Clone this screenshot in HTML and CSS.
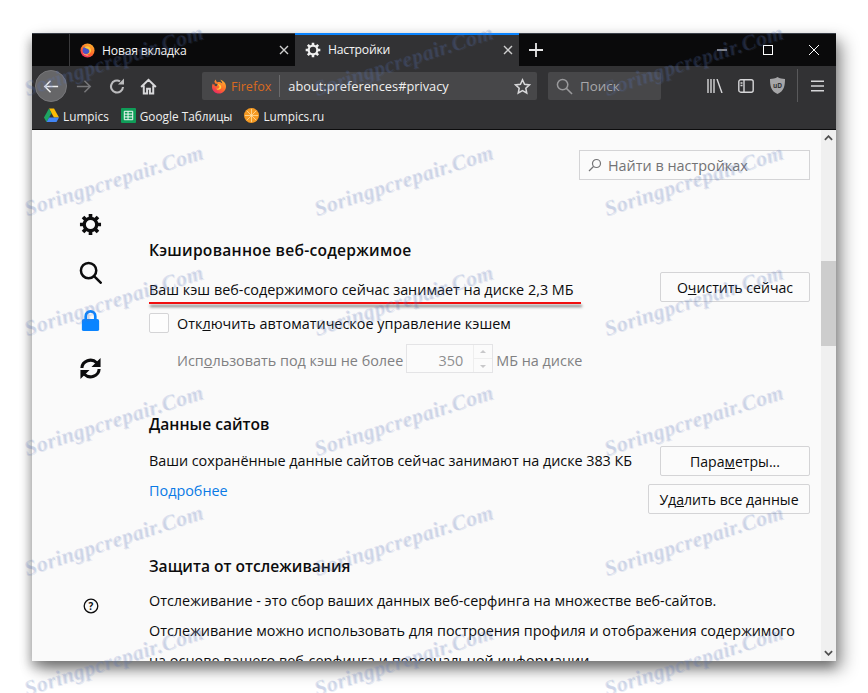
FILE: index.html
```html
<!DOCTYPE html>
<html lang="ru">
<head>
<meta charset="utf-8">
<title>Настройки</title>
<link rel="stylesheet" href="styles.css">
</head>
<body>
<svg class="defs" width="0" height="0" aria-hidden="true">
  <defs>
    <linearGradient id="fxg" x1="0.8" y1="0" x2="0.2" y2="1">
      <stop offset="0" stop-color="#ffb52e"/>
      <stop offset=".55" stop-color="#ff6a2a"/>
      <stop offset="1" stop-color="#e8206a"/>
    </linearGradient>
  </defs>
  <symbol id="fx" viewBox="0 0 16 16">
    <circle cx="8" cy="8" r="7.500" fill="url(#fxg)"/>
    <circle cx="6.800" cy="7.600" r="4" fill="#4a55c8"/>
    <path d="M4.500 4.200C6 3 9 3 10.800 5c1.500 1.800 1.400 4.400-.2 6-1.200 1.200-3 1.500-4.600.8 2 .2 3.800-.8 4-2.600.2-1.400-.6-2.600-2-3.200-1.300-.5-2.600-.6-3.500-1.800z" fill="#ffc93a"/>
    <path d="M3 10.500c1.500 2.600 4.400 3.300 6.800 2.300-2.600.2-5-.6-6.800-2.300z" fill="#ffd9a0"/>
  </symbol>
  <symbol id="fxbar" viewBox="0 0 16 16">
    <path d="M4.500 1.500L6 4.400C6.500 4.200 7.200 4 8 4c1.300 0 2.500.6 3.300 1.500-.3-1.500-1-2.800-2.200-3.700 3 .6 5.700 3 5.900 6.400.2 3.900-3 7.300-7 7.300s-7-3-7-6.800c0-1.200.3-2.300.8-3.300L3 7c.4-.4.800-.7 1.200-.9L3.400 3.500z" fill="url(#fxg)"/>
    <path d="M5.800 6.500c1.600-.6 3.500.1 4.200 1.500.7 1.500-.1 3.200-1.800 3.600-1.300.3-2.500-.2-3.100-1.200 1 .5 2.300.4 3-.4.700-.9.400-2.200-.6-2.800-.6-.4-1.200-.5-1.700-.7z" fill="#ffd23f"/>
    <path d="M4 5.500l2.700.5-1 2.200L3.600 8z" fill="#474749"/>
  </symbol>
  <symbol id="gear" viewBox="0 0 24 24">
    <g fill="none" stroke="currentColor">
      <circle cx="12" cy="12" r="6.500" stroke-width="3.400"/>
      <path stroke-width="3.800" d="M12 1v5M12 18v5M1 12h5M18 12h5M4.200 4.200l3.500 3.500M16.300 16.300l3.500 3.500M19.800 4.200l-3.500 3.500M7.700 16.300l-3.500 3.500"/>
    </g>
  </symbol>
</svg>

<div class="window">
  <div class="tabbar">
    <div class="tab-spacer"></div>
    <div class="tab">
      <svg class="ico15"><use href="#fx"/></svg>
      <span class="tab-title">Новая вкладка</span>
      <svg class="tab-x" viewBox="0 0 10 10"><path d="M1 1l8 8M9 1l-8 8"/></svg>
    </div>
    <div class="tab active">
      <svg class="ico15 gear-w"><use href="#gear"/></svg>
      <span class="tab-title">Настройки</span>
      <svg class="tab-x" viewBox="0 0 10 10"><path d="M1 1l8 8M9 1l-8 8"/></svg>
    </div>
    <svg class="plus" viewBox="0 0 14 14"><path d="M7 0v14M0 7h14"/></svg>
    <div class="winctl">
      <svg class="wc" viewBox="0 0 10 10"><path d="M0 5h10"/></svg>
      <svg class="wc" viewBox="0 0 10 10"><rect x=".5" y=".5" width="9" height="9"/></svg>
      <svg class="wc" viewBox="0 0 10 10"><path d="M0 0l10 10M10 0L0 10"/></svg>
    </div>
  </div>

  <div class="toolbar">
    <div class="back">
      <svg viewBox="0 0 18 16" class="nav-ico"><path d="M17 8H2M8.500 1.500L2 8l6.500 6.500"/></svg>
    </div>
    <svg viewBox="0 0 18 16" class="nav-ico fwd"><path d="M1 8h15M9.500 1.500L16 8l-6.500 6.500"/></svg>
    <svg viewBox="0 0 16 16" class="nav-ico reload"><path d="M14 9A6 6 0 1 1 11 3.300"/><path class="reload-head" d="M15 .5V6.500H9z"/></svg>
    <svg viewBox="0 0 18 18" class="nav-ico home"><path d="M1.200 9.500L9 2l7.800 7.500M4 8V16.500h3.500v-5h3v5H14V8"/></svg>
    <div class="urlbar">
      <svg class="ico15 ff-big"><use href="#fxbar"/></svg>
      <span class="ff-name">Firefox</span>
      <span class="url-sep"></span>
      <span class="url">about:preferences#privacy</span>
      <svg class="star" viewBox="0 0 18 18"><path d="M9 2l2.200 4.700 5.100.6-3.800 3.500 1 5.100L9 13.400l-4.500 2.500 1-5.100L1.700 7.300l5.100-.6z"/></svg>
    </div>
    <div class="searchbar">
      <svg class="s-ico" viewBox="0 0 18 18"><circle cx="7" cy="7" r="5.500"/><path d="M11 11l6 6"/></svg>
      <span>Поиск</span>
    </div>
    <div class="tools">
      <svg class="t-ico lib" viewBox="0 0 16 14"><path d="M1 0v14M4 0v14M7 0v14M10 0l5 14"/></svg>
      <svg class="t-ico side" viewBox="0 0 16 14"><rect x=".8" y=".8" width="14.400" height="12.400" rx="2"/><path d="M6 1v12M2.500 4h2M2.500 6.500h2"/></svg>
      <svg class="ublock" viewBox="0 0 16 18"><path d="M8 0c2.500 1.500 5 2 8 2 0 7-1 13-8 16C1 15 0 9 0 2c3 0 5.500-.5 8-2z" fill="#a6a6a8"/><text x="8" y="11.500" class="ub-text">uD</text></svg>
      <span class="tool-sep"></span>
      <svg class="t-ico menu" viewBox="0 0 14 12"><path d="M0 1h14M0 6h14M0 11h14"/></svg>
    </div>
  </div>

  <div class="bookmarks">
    <span class="bm">
      <svg class="ico15" viewBox="0 0 16 15"><path d="M5.300 0h5.400l5.300 9.500h-5.400z" fill="#fbbc04"/><path d="M5.300 0L0 9.700 2.700 14.500 8 5z" fill="#1ea362"/><path d="M2.700 14.500h10.600L16 9.700H5.400z" fill="#4285f4"/></svg>
      Lumpics
    </span>
    <span class="bm">
      <svg class="ico15 sheets" viewBox="0 0 16 16"><rect width="16" height="16" rx="1" fill="#0f9d58"/><path d="M3.500 3.500h9v9h-9zM3.500 6.500h9M3.500 9.500h9M7.500 3.500v9" fill="none" stroke="#fff"/></svg>
      Google Таблицы
    </span>
    <span class="bm">
      <svg class="ico15" viewBox="0 0 16 16"><circle cx="8" cy="8" r="8" fill="#f59a23"/><path d="M8 1v14M1 8h14M3 3l10 10M13 3L3 13" stroke="#ffe0a8" stroke-width=".8"/></svg>
      Lumpics.ru
    </span>
  </div>

  <div class="content">
    <nav class="sidebar">
      <svg class="cat cat-gear"><use href="#gear"/></svg>
      <svg class="cat" viewBox="0 0 24 24"><circle cx="10" cy="10" r="8" class="cat-line"/><path d="M16 16L23.500 23.500" class="cat-line"/></svg>
      <svg class="cat" viewBox="0 0 24 24"><path d="M7 11V7.500a5 5 0 0 1 10 0V11" class="cat-lock"/><rect x="3" y="10.500" width="18" height="12.500" rx="2" fill="#0a84ff"/></svg>
      <svg class="cat" viewBox="0 0 24 24"><path d="M3 11.500a9 8.500 0 0 1 15.500-5.500M21 12.500a9 8.500 0 0 1-15.500 5.500" class="cat-line cat-thick"/><path d="M22.500 1V10.500H13zM1.500 23V13.500H11z" fill="#0c0c0d"/></svg>
      <svg class="cat-help" viewBox="0 0 16 16"><circle cx="8" cy="8" r="6.800" class="help-line"/><text x="8" y="11.800" class="help-q">?</text></svg>
    </nav>
    <main class="main">
      <div class="find-row">
        <div class="find">
          <svg class="find-ico" viewBox="0 0 14 14"><circle cx="8.500" cy="5.500" r="4"/><path d="M5.500 8.500L1 13"/></svg>
          <span>Найти в настройках</span>
        </div>
      </div>

      <h2 class="h h-first">Кэшированное веб-содержимое</h2>
      <div class="row row-cache">
        <span class="cache-text">Ваш кэш веб-содержимого сейчас занимает на диске 2,3 МБ</span>
        <button class="btn btn-clear">О<u>ч</u>истить сейчас</button>
      </div>
      <div class="redline"></div>
      <div class="check-row">
        <span class="checkbox"></span>
        <span>Отк<u>л</u>ючить автоматическое управление кэшем</span>
      </div>
      <div class="limit-row">
        <span class="limit-text">Исп<u>о</u>льзовать под кэш не более</span>
        <span class="spin">
          <span class="spin-val">350</span>
          <span class="spin-arrows"><i class="up"></i><i class="down"></i></span>
        </span>
        <span class="limit-text">МБ на диске</span>
      </div>

      <h2 class="h h-data">Данные сайтов</h2>
      <div class="data-row">
        <div class="data-text">
          <p class="data-line">Ваши сохранённые данные сайтов сейчас занимают на диске 383 КБ</p>
          <a class="more">Подробнее</a>
        </div>
        <div class="data-btns">
          <button class="btn btn-params">Пара<u>м</u>етры...</button>
          <button class="btn btn-del">Уд<u>а</u>лить все данные</button>
        </div>
      </div>

      <h2 class="h h-track">Защита от отслеживания</h2>
      <p class="para">Отслеживание - это сбор ваших данных веб-серфинга на множестве веб-сайтов.</p>
      <p class="para">Отслеживание можно использовать для построения профиля и отображения содержимого<br>на основе вашего веб-серфинга и персональной информации.</p>
    </main>
    <div class="scrollbar">
      <svg class="sb-arrow" viewBox="0 0 10 6"><path d="M1 5l4-4 4 4"/></svg>
      <div class="sb-track"><div class="sb-thumb"></div></div>
      <svg class="sb-arrow" viewBox="0 0 10 6"><path d="M1 1l4 4 4-4"/></svg>
    </div>
  </div>
</div>

<div class="marks" aria-hidden="true">
  <span>Soringpcrepair.Com</span><span>Soringpcrepair.Com</span><span>Soringpcrepair.Com</span>
  <span>Soringpcrepair.Com</span><span>Soringpcrepair.Com</span><span>Soringpcrepair.Com</span>
  <span>Soringpcrepair.Com</span><span>Soringpcrepair.Com</span><span>Soringpcrepair.Com</span>
  <span>Soringpcrepair.Com</span><span>Soringpcrepair.Com</span><span>Soringpcrepair.Com</span>
  <span>Soringpcrepair.Com</span><span>Soringpcrepair.Com</span><span>Soringpcrepair.Com</span>
  <span>Soringpcrepair.Com</span><span>Soringpcrepair.Com</span><span>Soringpcrepair.Com</span>
</div>
</body>
</html>
```

FILE: styles.css
```css
* { box-sizing: border-box; }
html, body { height: 100%; overflow: hidden; }
body {
  margin: 0;
  padding: 33px 32px 32px;
  background: #fff;
  font-family: "Open Sans", "Noto Sans", sans-serif;
  font-size: 14.4px;
  color: #0c0c0d;
  position: relative;
}
.defs { position: absolute; }
.window {
  width: 804px;
  height: 628px;
  display: flex;
  flex-direction: column;
  box-shadow: 6px 8px 16px rgba(0,0,0,.42), -2px 6px 10px rgba(0,0,0,.28);
  overflow: hidden;
  background: #fafafa;
}

/* tabs */
.tabbar {
  height: 33px;
  flex: none;
  display: flex;
  align-items: stretch;
  background: #0a0a0b;
  border-top: 1px solid #3a3f48;
  color: #f5f5f5;
  font-size: 12.2px;
  letter-spacing: -.2px;
}
.tab-spacer { width: 38px; border-right: 1px solid #3a3a3c; }
.tab {
  width: 225px;
  display: flex;
  align-items: center;
  padding: 0 6px 0 10px;
  gap: 7px;
}
.tab.active {
  width: 224px;
  background: #323234;
  border-top: 2px solid #0a84ff;
  padding-bottom: 2px;
  margin-top: -1px;
}
.tab-title { flex: 1; }
.ico15 { width: 15px; height: 15px; flex: none; }
.gear-w { color: #f0f0f0; width: 16px; height: 16px; }
.tab-x { width: 10px; height: 10px; stroke: #cfcfcf; stroke-width: 1.4; fill: none; }
.plus { width: 14px; height: 14px; margin: 9px 0 0 10px; stroke: #e8e8e8; stroke-width: 1.8; fill: none; }
.winctl { margin-left: auto; display: flex; align-items: center; gap: 36px; padding-right: 17px; }
.wc { width: 10px; height: 10px; stroke: #fff; fill: none; stroke-width: 1; }

/* toolbar */
.toolbar {
  height: 36px;
  flex: none;
  display: flex;
  align-items: center;
  background: #323234;
  padding: 4px 0 0 3px;
  color: #f9f9fa;
}
.back {
  width: 32px; height: 32px;
  border-radius: 50%;
  background: #666668;
  border: 1px solid #77777a;
  display: flex; align-items: center; justify-content: center;
  flex: none;
}
.nav-ico { width: 16px; height: 15px; fill: none; stroke: #e0e0e2; stroke-width: 1.7; flex: none; }
.back .nav-ico { stroke: #f0f0f0; }
.fwd { stroke: #77777a; margin-left: 9px; }
.reload { stroke: #bcbcbe; margin-left: 17px; stroke-width: 2.1; width: 16px; height: 16px; }
.reload-head { fill: #bcbcbe; stroke: none; }
.home { stroke: #d8d8da; margin-left: 15px; width: 17px; height: 17px; stroke-width: 2.1; }
.urlbar {
  width: 335px; height: 28px;
  margin-left: 45px;
  background: #474749;
  border-radius: 2px;
  display: flex; align-items: center;
  padding: 0 6px 0 9px;
  flex: none;
}
.ff-big { width: 16px; height: 16px; }
.ff-name { color: #d96a1f; font-size: 12.6px; margin-left: 4px; }
.url-sep { width: 1px; height: 22px; background: #6a6a6c; margin: 0 8px; }
.url { flex: 1; font-size: 12.8px; color: #f0f0f0; white-space: nowrap; }
.star { width: 17px; height: 17px; fill: none; stroke: #d8d8da; stroke-width: 1.6; }
.searchbar {
  width: 113px; height: 28px;
  margin-left: 11px;
  background: #474749;
  border-radius: 2px;
  display: flex; align-items: center;
  gap: 7px;
  padding-left: 8px;
  color: #a8a8ab;
  font-size: 13.4px;
  flex: none;
}
.s-ico { width: 17px; height: 17px; fill: none; stroke: #9a9a9c; stroke-width: 1.6; }
.tools { display: flex; align-items: center; margin-left: 46px; flex: 1; margin-top: -1px; }
.t-ico { fill: none; stroke: #d6d6d8; flex: none; }
.lib { width: 16px; height: 14px; stroke-width: 1.4; }
.side { width: 16px; height: 14px; margin-left: 15px; stroke-width: 1.4; }
.ublock { width: 15px; height: 17px; margin-left: 16px; flex: none; }
.ub-text { font-family: "Open Sans", sans-serif; font-size: 7px; font-weight: 700; fill: #323234; text-anchor: middle; }
.tool-sep { width: 1px; height: 34px; background: #59595b; margin-left: 12px; }
.menu { width: 13px; height: 12px; margin-left: 13px; stroke-width: 1.6; }

/* bookmarks */
.bookmarks {
  height: 28px;
  flex: none;
  display: flex;
  align-items: center;
  gap: 12px;
  background: #323234;
  padding: 0 0 0 12px;
  border-bottom: 1px solid #0c0c0d;
  color: #f0f0f0;
  font-size: 11.8px;
}
.bm { display: flex; align-items: center; gap: 4px; }

/* content */
.content { flex: 1; display: flex; min-height: 0; background: #fafafa; overflow: hidden; }
.sidebar {
  width: 117px;
  flex: none;
  display: flex;
  flex-direction: column;
  align-items: center;
  padding: 83px 0 0 0;
}
.cat { width: 23px; height: 23px; margin: 0 0 25px 0; flex: none; }
.cat-gear { color: #0c0c0d; }
.cat-line { fill: none; stroke: #0c0c0d; stroke-width: 2.6; }
.cat-thick { stroke-width: 3.2; }
.cat-lock { fill: none; stroke: #0a84ff; stroke-width: 2.8; }
.cat-help { width: 16px; height: 16px; margin-top: 193px; flex: none; }
.help-line { fill: none; stroke: #0c0c0d; stroke-width: 1.3; }
.help-q { font-family: "Open Sans", sans-serif; font-size: 10px; font-weight: 700; text-anchor: middle; fill: #0c0c0d; }

.main { flex: 1; min-width: 0; padding: 20px 11px 0 0; }
.find-row { display: flex; justify-content: flex-end; }
.find {
  width: 231px; height: 30px;
  border: 1px solid #d4d4d6;
  background: #fbfbfb;
  display: flex; align-items: center;
  gap: 6px;
  padding-left: 8px;
  color: #737375;
}
.find-ico { width: 14px; height: 14px; fill: none; stroke: #737375; stroke-width: 1.2; }
.h { margin: 0; font-size: 15.6px; font-weight: 600; line-height: 22px; }
.h-first { margin-top: 59px; letter-spacing: .25px; }
.row-cache { display: flex; align-items: center; justify-content: space-between; margin-top: 11px; height: 30px; }
.cache-text { padding-top: 4px; }
.btn {
  font: inherit;
  font-size: 14.1px;
  color: #0c0c0d;
  background: #fbfbfb;
  border: 1px solid #d4d4d6;
  border-radius: 2px;
  height: 30px;
  padding: 0;
  flex: none;
}
.btn-clear, .btn-params { width: 150px; }
.btn-del { width: 162px; }
.redline {
  width: 432px; height: 2px;
  background: #f00f0f;
  box-shadow: 1px 3px 3px rgba(0,0,0,.55);
}
.check-row { display: flex; align-items: center; gap: 8px; margin-top: 9px; height: 20px; }
.checkbox { width: 20px; height: 20px; border: 1px solid #d4d4d6; border-radius: 2px; background: #fdfdfd; }
.limit-row { display: flex; align-items: center; margin: 10px 0 0 28px; height: 30px; color: #808082; gap: 3px; }
.limit-text { padding-top: 5px; }
.spin {
  width: 87px; height: 29px;
  border: 1px solid #e4e4e6;
  display: flex; align-items: center;
  color: #8f8f91;
  background: #fbfbfb;
  padding-top: 4px;
}
.spin-val { flex: 1; text-align: right; padding-right: 10px; }
.spin-arrows { width: 19px; display: flex; flex-direction: column; border-left: 1px solid #eee; margin-top: -4px; height: 27px; }
.spin-arrows i { flex: 1; display: block; position: relative; }
.up { border-bottom: 1px solid #eee; }
.up::after { content: ""; position: absolute; left: 6px; top: 5px; border: 3px solid transparent; border-bottom-color: #c8c8ca; border-top: 0; }
.down::after { content: ""; position: absolute; left: 6px; top: 6px; border: 3px solid transparent; border-top-color: #c8c8ca; border-bottom: 0; }

.h-data { margin-top: 40px; }
.data-row { display: flex; justify-content: space-between; margin-top: 11px; }
.data-line { margin: 0; line-height: 30px; white-space: nowrap; letter-spacing: -.05px; }
.more { display: block; line-height: 30px; color: #0a7ae6; }
.data-btns { display: flex; flex-direction: column; align-items: flex-end; gap: 8px; }
.h-track { margin-top: 41px; }
.para { margin: 9px 0 0; line-height: 30px; white-space: nowrap; }
.para + .para { margin-top: 0; }

.scrollbar { width: 15px; flex: none; background: #f0f0f0; display: flex; flex-direction: column; align-items: center; }
.sb-arrow { width: 9px; height: 6px; margin: 5px 0; fill: none; stroke: #505050; stroke-width: 2; flex: none; }
.sb-track { flex: 1; width: 100%; padding-top: 115px; }
.sb-thumb { height: 85px; background: #cdcdcd; }

/* watermark overlay */
.marks {
  position: absolute;
  inset: 0;
  overflow: hidden;
  padding: 45px 0 0 20px;
  display: grid;
  grid-template-columns: repeat(3, 290px);
  grid-auto-rows: 120px;
  pointer-events: none;
}
.marks span {
  display: block;
  width: 190px;
  height: 30px;
  font-family: "Liberation Serif", serif;
  font-style: italic;
  font-weight: 700;
  font-size: 21.5px;
  line-height: 30px;
  white-space: nowrap;
  letter-spacing: .4px;
  color: rgba(90, 120, 190, .2);
  text-shadow: 1px 1px 0 rgba(90, 110, 170, .12);
  transform: rotate(-18deg);
  transform-origin: center;
}
```
